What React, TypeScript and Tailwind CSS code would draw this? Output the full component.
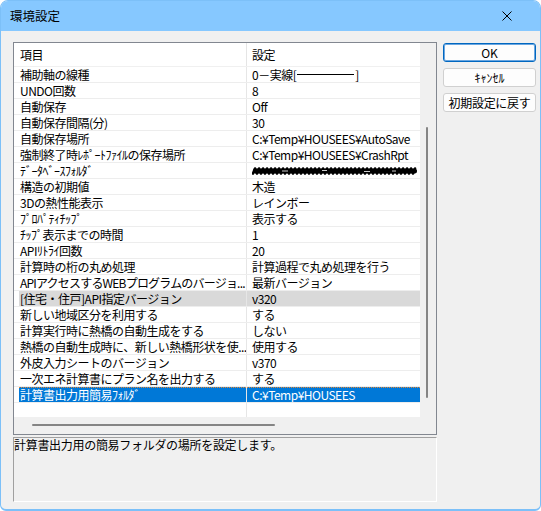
import React from 'react';

type Row = {
  name: string;
  value: React.ReactNode;
  state?: 'hover' | 'selected';
  tight?: boolean;
};

// 黒塗りされた値（スクリブル）
const Scribble = () => {
  const pts: string[] = [];
  for (let x = 1; x <= 164; x += 2) {
    const y = Math.round(x / 2) % 2 === 0 ? 1.5 : 6.5;
    pts.push(`${x.toFixed(1)},${y}`);
  }
  return (
    <svg width="166" height="8" viewBox="0 0 166 8" className="mt-[4px] block">
      <polyline points={pts.join(' ')} fill="none" stroke="#000" strokeWidth="2.6" strokeLinejoin="round" strokeLinecap="round" />
      <rect x="1" y="1.5" width="164" height="5" rx="2.5" fill="#000" />
      <path d="M30 4 h6 M70 3.5 h5 M112 4.5 h6 M140 4 h4" stroke="#fff" strokeWidth="0.8" />
    </svg>
  );
};

const LineSample = () => (
  <span className="inline-flex items-center">
    0－実線[
    <span className="mx-[1px] inline-block h-px w-[57px] bg-black" />]
  </span>
);

const rows: Row[] = [
  { name: '補助軸の線種', value: <LineSample /> },
  { name: 'UNDO回数', value: '8' },
  { name: '自動保存', value: 'Off' },
  { name: '自動保存間隔(分)', value: '30' },
  { name: '自動保存場所', value: 'C:¥Temp¥HOUSEES¥AutoSave' },
  { name: '強制終了時ﾚﾎﾟｰﾄﾌｧｲﾙの保存場所', value: 'C:¥Temp¥HOUSEES¥CrashRpt' },
  { name: 'ﾃﾞｰﾀﾍﾞｰｽﾌｫﾙﾀﾞ', value: <Scribble /> },
  { name: '構造の初期値', value: '木造' },
  { name: '3Dの熱性能表示', value: 'レインボー' },
  { name: 'ﾌﾟﾛﾊﾟﾃｨﾁｯﾌﾟ', value: '表示する' },
  { name: 'ﾁｯﾌﾟ表示までの時間', value: '1' },
  { name: 'APIﾘﾄﾗｲ回数', value: '20' },
  { name: '計算時の桁の丸め処理', value: '計算過程で丸め処理を行う' },
  { name: 'APIアクセスするWEBプログラムのバージョ...', value: '最新バージョン', tight: true },
  { name: '[住宅・住戸]API指定バージョン', value: 'v320', state: 'hover' },
  { name: '新しい地域区分を利用する', value: 'する' },
  { name: '計算実行時に熱橋の自動生成をする', value: 'しない' },
  { name: '熱橋の自動生成時に、新しい熱橋形状を使...', value: '使用する' },
  { name: '外皮入力シートのバージョン', value: 'v370' },
  { name: '一次エネ計算書にプラン名を出力する', value: 'する' },
  { name: '計算書出力用簡易ﾌｫﾙﾀﾞ', value: 'C:¥Temp¥HOUSEES', state: 'selected' },
];

const cellState = (state?: Row['state']) => {
  if (state === 'selected') return 'bg-[#0078d7] text-white border-t border-dotted border-[#e0883a] leading-[14px]';
  if (state === 'hover') return 'bg-[#d9d9d9]';
  return '';
};

export default function App() {
  return (
    <div className="h-[511px] w-[541px] bg-white">
      <div className="flex h-full flex-col overflow-hidden rounded-t-lg rounded-b-md border border-b-2 border-[#7cc0f8] bg-[#f0f0f0] font-['Noto_Sans_CJK_JP',sans-serif] text-[12px] text-black">
        {/* Title bar */}
        <div className="flex h-[30px] shrink-0 items-center justify-between bg-[#86c8ff] pl-[9px] pr-[28px]">
          <span className="text-[12.5px] leading-none">環境設定</span>
          <svg width="10" height="10" viewBox="0 0 10 10">
            <path d="M0.5 0.5 L9.5 9.5 M9.5 0.5 L0.5 9.5" stroke="#000" strokeWidth="1" />
          </svg>
        </div>

        {/* Body */}
        <div className="flex flex-1 pl-[12px] pt-[11px] pb-[7px] pr-[4px]">
          <div className="flex w-[424px] flex-col gap-[2px]">
            {/* Property list */}
            <div className="flex h-[393px] flex-col border border-[#828790] bg-[#f0f0f0]">
              <div className="flex min-h-0 flex-1">
                <div className="flex w-[406px] flex-col overflow-hidden bg-white tracking-[-0.5px]">
                  {/* Header */}
                  <div className="flex h-[24px] shrink-0 items-center border-b border-[#f0f0f0]">
                    <div className="w-[5px]" />
                    <div className="w-[227px] pl-[1px] leading-[15px]">項目</div>
                    <div className="h-full w-px bg-[#e5e5e5]" />
                    <div className="flex-1 pl-[5px] leading-[15px]">設定</div>
                  </div>
                  {rows.map((r, i) => (
                    <div key={i} className="flex h-[16px] shrink-0 border-b border-[#ededed] leading-[15px]">
                      <div className="w-[5px]" />
                      <div
                        className={`w-[227px] overflow-hidden whitespace-nowrap pl-[1px] ${r.tight ? 'tracking-[-0.8px]' : ''} ${cellState(r.state)}`}
                      >
                        {r.name}
                      </div>
                      <div className="w-px bg-[#e6e6e6]" />
                      <div className={`flex-1 overflow-hidden whitespace-nowrap pl-[5px] ${cellState(r.state)}`}>{r.value}</div>
                    </div>
                  ))}
                  <div className="flex flex-1">
                    <div className="w-[5px]" />
                    <div className="w-[227px]" />
                    <div className="w-px bg-[#e6e6e6]" />
                    <div className="flex-1" />
                  </div>
                </div>
                {/* Vertical scrollbar */}
                <div className="w-[16px] pl-[6px] pt-[84px]">
                  <div className="h-[271px] w-[2px] rounded-full bg-[#858585]" />
                </div>
              </div>
              {/* Horizontal scrollbar */}
              <div className="h-[17px] shrink-0 pl-[18px] pt-[7px]">
                <div className="h-[2px] w-[243px] rounded-full bg-[#858585]" />
              </div>
            </div>

            {/* Description */}
            <div className="h-[65px] border border-t-[#a0a0a0] border-l-[#a0a0a0] border-r-white border-b-white leading-[14px] tracking-[-0.3px]">
              計算書出力用の簡易フォルダの場所を設定します。
            </div>
          </div>

          {/* Buttons */}
          <div className="ml-[6px] flex w-[93px] flex-col gap-[6px] pt-[1px]">
            <button className="h-[19px] rounded-[3px] border border-[#0067c0] bg-[#fdfdfd] text-[12px] leading-none shadow-[inset_0_0_0_1px_#6aa6e0]">
              OK
            </button>
            <button className="h-[19px] rounded-[3px] border border-[#d0d0d0] bg-[#fdfdfd] text-[12px] leading-none">
              ｷｬﾝｾﾙ
            </button>
            <button className="h-[19px] rounded-[3px] border border-[#d0d0d0] bg-[#fdfdfd] px-0 text-[12px] leading-none whitespace-nowrap tracking-[-0.3px]">
              初期設定に戻す
            </button>
          </div>
        </div>
      </div>
    </div>
  );
}
